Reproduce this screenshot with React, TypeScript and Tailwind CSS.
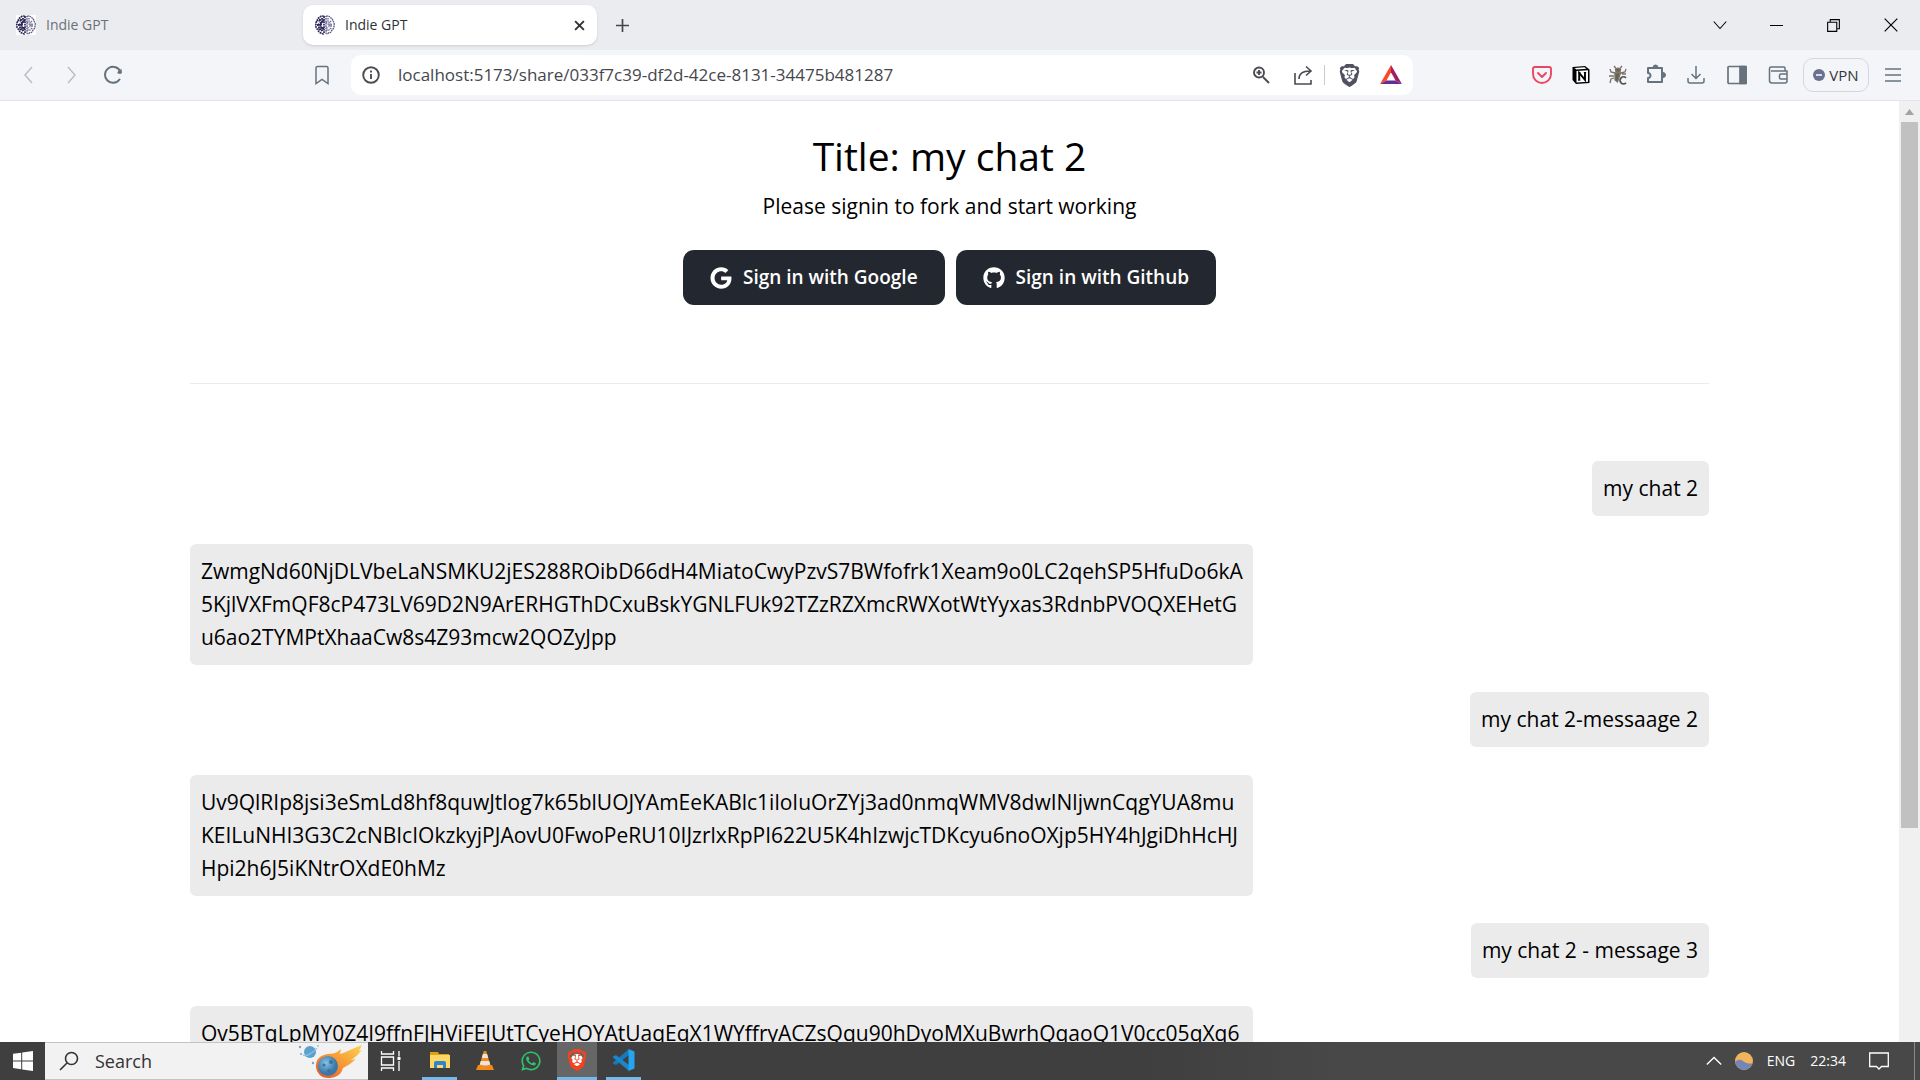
import React from "react";
import { FaGithub, FaGoogle, FaWhatsapp } from "react-icons/fa";
import { SiBrave } from "react-icons/si";

type IconProps = { className?: string };

function BrainIcon({ className }: IconProps) {
  return (
    <svg viewBox="0 0 20 20" className={className} fill="none" stroke="#2b2756" aria-hidden="true">
      <path d="M9 1.500C7 .3 5.500 1.500 5 2.500 3 3 2 4.500 2.500 6 .8 7 .3 9 1.200 10.500.6 12.500 1.500 14 3 14.500 3.300 17 5 18 6.500 17.800 7.500 19.300 9 19 9 18z" strokeWidth="1.700" strokeDasharray="1.800 .7" />
      <path d="M11 1.500c2-1.200 3.500 0 4 1 2 .5 3 2 2.500 3.500 1.700 1 2.200 3 1.300 4.500.6 2-.3 3.500-1.800 4-.3 2.500-2 3.500-3.500 3.300-1 1.500-2.500 1.200-2.500.2z" stroke="#5f5b88" strokeWidth="1.400" strokeDasharray="1.700 .7" />
      <path d="M7 3v4l-3 2v4l3 3M9 5 6 8v4l3 2M2 10h4M4 5l2 2M4 15l3-3M5 4v2M7 12v4" strokeWidth="1.900" strokeDasharray="1.700 .8" />
      <path d="M13 3v4l3 2v4l-3 3M11 7l3 3v3M16 6l-2 2M12 12v4M14 10h3" stroke="#716d98" strokeWidth="1.400" strokeDasharray="1.500 .8" />
    </svg>
  );
}

function Line({ d, size = "size-5", width = 1.5, className = "" }: { d: string; size?: string; width?: number; className?: string }) {
  return (
    <svg viewBox="0 0 20 20" className={`${size} ${className}`} fill="none" stroke="currentColor" strokeWidth={width} aria-hidden="true">
      <path d={d} />
    </svg>
  );
}

function ReloadIcon() {
  return (
    <svg viewBox="0 0 20 20" className="size-5" fill="none" stroke="currentColor" strokeWidth="2" strokeLinecap="round" aria-hidden="true">
      <path d="M16.500 14.500A8 8 0 1 1 17.500 7" />
      <path d="M18.500 3.500v4.800h-4.700z" fill="currentColor" stroke="none" />
      <circle cx="16.800" cy="7" r="2" fill="currentColor" stroke="none" />
    </svg>
  );
}

function InfoIcon() {
  return (
    <svg viewBox="0 0 20 20" className="size-5" fill="none" stroke="currentColor" strokeWidth="1.900" aria-hidden="true">
      <circle cx="10" cy="10" r="7.800" />
      <path d="M10 9v5M10 5.600v2" />
    </svg>
  );
}

function BatIcon() {
  return (
    <svg viewBox="0 0 24 22" className="h-5 w-6" aria-hidden="true">
      <path d="M12 0 0 21l7-4 5-9z" fill="#ff4724" />
      <path d="M12 0l12 21-7-4-5-9z" fill="#9e1f63" />
      <path d="M0 21h24l-7-4H7z" fill="#662d91" />
    </svg>
  );
}

function PocketIcon() {
  return (
    <svg viewBox="0 0 20 20" className="size-5 text-[#ec4561]" fill="none" stroke="currentColor" strokeWidth="1.900" strokeLinecap="round" strokeLinejoin="round" aria-hidden="true">
      <path d="M3 2h14q2 0 2 2v5a9 9 0 0 1-18 0V4q0-2 2-2z" />
      <path d="m6 8 4 4 4-4" />
    </svg>
  );
}

function NotionIcon() {
  return (
    <svg viewBox="0 0 20 20" className="size-5" aria-hidden="true">
      <path d="M1.500 2 14 1l4.500 3.500V18L5 19l-3.500-4z" fill="#000" />
      <path d="M3.500 3 13.500 2.300 15.500 3.800 5.500 4.500z" fill="#fff" />
      <path d="M5.500 6 17 5.300V16.700L5.500 17.500z" fill="#fff" />
      <path d="M8.200 15V7.800l5.800 7V7.500" fill="none" stroke="#000" strokeWidth="1.900" />
      <path d="M7 7.800h2.600M12.800 7.500h2.400M7 15.200h2.400" stroke="#000" />
    </svg>
  );
}

function BugIcon() {
  return (
    <svg viewBox="0 0 20 20" className="size-5" fill="none" stroke="#7a7267" strokeWidth="1.300" aria-hidden="true">
      <path d="M6 1 8.500 4M14 1l-2.500 3M2 4l1 3 4 1M18 4l-1 3-4 1M1 11h5M2 18l1-4 3-1M14 9h4" />
      <path d="M7.500 4.500 10 3l2.500 1.500L12 7H8z" fill="#6b6256" />
      <path d="M7 8h5.500L9.500 17 7 15z" fill="#6b6256" />
      <path d="M18 12.800a3.500 3.500 0 1 0 0 5" stroke="#555" strokeWidth="1.800" />
    </svg>
  );
}

function PuzzleIcon() {
  return (
    <svg viewBox="0 0 22 22" className="size-[22px]" fill="none" stroke="currentColor" strokeWidth="2" strokeLinejoin="round" aria-hidden="true">
      <path d="M3 4h14v14H3v-4c3 0 3.500-5 0-5z" />
      <path d="M8 3.500a2.500 2.500 0 0 1 5 0M18 8.500a2.500 2.500 0 0 1 0 5" fill="currentColor" strokeWidth="1" />
    </svg>
  );
}

function SidebarIcon() {
  return (
    <svg viewBox="0 0 20 20" className="size-5" fill="none" stroke="currentColor" strokeWidth="1.700" aria-hidden="true">
      <rect x="1" y="1.500" width="18" height="17" rx="1" />
      <path d="M13 1.500h6v17h-6z" fill="currentColor" />
    </svg>
  );
}

function WindowsIcon() {
  return (
    <svg viewBox="0 0 20 20" className="size-5" fill="#fff" aria-hidden="true">
      <path d="M0 2.800 8.200 1.700v7.700H0zM9.200 1.500 20 0v9.400H9.200zM0 10.400h8.200v7.800L0 17.100zM9.200 10.400H20V20L9.200 18.400z" />
    </svg>
  );
}

function CometArt() {
  return (
    <svg viewBox="0 0 66 34" className="h-[34px] w-[66px]" aria-hidden="true">
      <defs>
        <linearGradient id="tail" x1="0" y1="1" x2="1" y2="0">
          <stop offset="0" stopColor="#e2502c" />
          <stop offset=".5" stopColor="#f79a35" />
          <stop offset="1" stopColor="#fdd34c" />
        </linearGradient>
        <radialGradient id="rock" cx=".4" cy=".35">
          <stop offset="0" stopColor="#86c3e6" />
          <stop offset="1" stopColor="#3a78a9" />
        </radialGradient>
      </defs>
      <path d="M20 15C26 8 34 11 39 8l4-3-1 5C49 8 55 4 64 1l-3 6 3-1c-5 6-8 8-11 10l5-1c-7 6-9 7-13 9-2 8-9 10-15 10-10 0-15-11-10-19z" fill="url(#tail)" />
      <circle cx="30" cy="22" r="10" fill="url(#rock)" />
      <circle cx="33" cy="18" r="2" fill="#3f7199" />
      <circle cx="26" cy="21" r="1.600" fill="#3f7199" />
      <circle cx="31" cy="27" r="2" fill="#3f7199" />
      <circle cx="12" cy="8" r="6" fill="#5ba1ce" />
      <path d="M5 11c3 2 10-2 14-7" fill="none" stroke="#8cc2e0" strokeWidth="1.200" />
      <g fill="#6ba7cd">
        <circle cx="2" cy="3" r="1.200" />
        <circle cx="3" cy="10" r="1" />
        <circle cx="15" cy="19" r="1.200" />
        <circle cx="20" cy="2" r=".8" />
      </g>
    </svg>
  );
}

function TaskViewIcon() {
  return (
    <svg viewBox="0 0 22 20" className="h-5 w-[22px]" fill="none" stroke="#fff" strokeWidth="1.300" aria-hidden="true">
      <path d="M1.500 0v3h12V0M1.500 20v-3h12v3M1.500 6h12v8h-12zM19 0v5.500M19 10v10" />
      <path d="M17.500 6h3v3h-3z" fill="#fff" stroke="none" />
    </svg>
  );
}

function ExplorerIcon() {
  return (
    <svg viewBox="0 0 20 18" className="h-[18px] w-5" aria-hidden="true">
      <path d="M0 1h8l1 2h10v4H0z" fill="#dda318" />
      <path d="M0 4h20v13H0z" fill="#fdd663" />
      <path d="M4 17v-5q0-2 2-2h8q2 0 2 2v5h-3v-3H7v3z" fill="#2c86cf" />
    </svg>
  );
}

function VlcIcon() {
  return (
    <svg viewBox="0 0 20 20" className="size-5" aria-hidden="true">
      <path d="m3 14-2 5h18l-2-5z" fill="#f58a12" />
      <path d="M8.800 0h2.400L16 16q-6 3-12 0z" fill="#f28a1c" />
      <path d="M7.900 3h4.200l1.100 4H6.800zM5.800 10h8.400l1 3.500q-5 2-10.400 0z" fill="#e9e6e2" />
    </svg>
  );
}

function VsCodeIcon() {
  return (
    <svg viewBox="0 0 22 22" className="size-[22px]" aria-hidden="true">
      <path d="M16 0v6L3 16 0 14.500v-1z" fill="#1479bd" />
      <path d="M0 7.500 3 6l13 10v6L0 8.500z" fill="#1b86cb" />
      <path d="m15.500 0 6 2.500v17l-6 2.500z" fill="#27a4ef" />
    </svg>
  );
}

function BraveColor() {
  return (
    <span className="relative grid place-items-center">
      <span className="absolute size-3 rounded-full bg-white" />
      <SiBrave className="relative size-[22px] text-[#f4411f]" />
    </span>
  );
}

function IconButton({ label, className, children }: { label: string; className: string; children: React.ReactNode }) {
  return (
    <button type="button" aria-label={label} className={`grid shrink-0 place-items-center ${className}`}>
      {children}
    </button>
  );
}

function TabStrip() {
  return (
    <header className="flex h-[50px] shrink-0 items-center bg-[#ebecf0] text-sm">
      <button type="button" className="flex h-10 w-[303px] items-center gap-2.5 pl-4 text-[#6d6f76]">
        <span className="bg-white"><BrainIcon className="size-5" /></span>
        Indie GPT
      </button>
      <div className="flex h-10 w-[294px] items-center rounded-[10px] bg-white pr-2 pl-3 text-[#2f3136] shadow-sm">
        <BrainIcon className="size-5" />
        <span className="flex-1 pl-2.5">Indie GPT</span>
        <IconButton label="Close tab" className="size-5">
          <Line d="m2 2 16 16M18 2 2 18" size="size-[11px]" width={3.4} />
        </IconButton>
      </div>
      <IconButton label="New tab" className="ml-[11px] size-7 text-[#45474d]">
        <Line d="M10 0v20M0 10h20" size="size-[13px]" width={2.6} />
      </IconButton>
      <div className="mr-px ml-auto flex h-full text-black">
        <IconButton label="Search tabs" className="w-[57px]"><Line d="m1 5 9 10 9-10" size="size-[14px]" /></IconButton>
        <IconButton label="Minimize" className="w-[57px]"><Line d="M0 10h20" size="size-[13px]" width={1.6} /></IconButton>
        <IconButton label="Restore" className="w-[57px]"><Line d="M1 5h14v14H1zM5 5V1h14v14h-4" size="size-[13px]" width={1.7} /></IconButton>
        <IconButton label="Close window" className="w-[57px]"><Line d="m1 1 18 18M19 1 1 19" size="size-[14px]" width={1.7} /></IconButton>
      </div>
    </header>
  );
}

function Toolbar() {
  return (
    <nav aria-label="Browser" className="flex h-[51px] shrink-0 items-center border-b border-[#e2e5e9] bg-[#f3f5f8] text-[#66737e]">
      <IconButton label="Back" className="ml-2 w-[42px] text-[#b9bfc5]"><Line d="M13 2 6 10l7 8" /></IconButton>
      <IconButton label="Forward" className="w-[42px] text-[#b9bfc5]"><Line d="m7 2 7 8-7 8" /></IconButton>
      <IconButton label="Reload" className="w-[42px]"><ReloadIcon /></IconButton>
      <IconButton label="Bookmark" className="ml-[168px] w-10"><Line d="M4 18.500V3q0-1.500 1.500-1.500h9Q16 1.500 16 3v15.500l-6-4z" /></IconButton>
      <div className="ml-[9px] flex h-10 min-w-0 grow items-center rounded-[10px] bg-white pr-1 pl-[10px] text-[#4a4c52]">
        <IconButton label="Site information" className="size-5"><InfoIcon /></IconButton>
        <input
          aria-label="Address"
          readOnly
          defaultValue="localhost:5173/share/033f7c39-df2d-42ce-8131-34475b481287"
          className="ml-[17px] min-w-0 flex-1 bg-transparent text-[17px] text-[#45474c] outline-none"
        />
        <IconButton label="Zoom" className="w-10">
          <Line d="M8 2.500a5 5 0 1 1 0 10 5 5 0 0 1 0-10M12 12l6 6M5.500 7.500h5M8 5v5" width={1.9} />
        </IconButton>
        <IconButton label="Share" className="w-[43px]">
          <Line d="M2 8v11h16v-4M6 14c0-6 4-8 11-8M13 1.500 18 6l-5 4.500" width={1.6} />
        </IconButton>
        <span className="h-5 w-px bg-[#c8cacf]" />
        <IconButton label="Shields" className="w-[48px]"><SiBrave className="size-[23px] text-[#50525f]" /></IconButton>
        <IconButton label="Rewards" className="w-9"><BatIcon /></IconButton>
      </div>
      <div className="ml-[109px] flex h-full items-center">
        <IconButton label="Pocket" className="w-10"><PocketIcon /></IconButton>
        <IconButton label="Notion" className="w-[38px]"><NotionIcon /></IconButton>
        <IconButton label="Debugger" className="w-9"><BugIcon /></IconButton>
        <IconButton label="Extensions" className="w-10"><PuzzleIcon /></IconButton>
        <IconButton label="Downloads" className="w-10"><Line d="M10 1v12M5.500 9l4.500 4.500L14.500 9M2 13v3q0 2 2 2h12q2 0 2-2v-3" /></IconButton>
        <IconButton label="Sidebar" className="w-[42px]"><SidebarIcon /></IconButton>
        <IconButton label="Wallet" className="w-10"><Line d="M17 6V3q0-1-1-1H3Q1.500 2 1.500 3.500v12Q1.500 18 4 18h13q2 0 2-2V6H3M19 9h-6q-1.500 0-1.500 1.500v2q0 1.500 1.500 1.500h6" /></IconButton>
        <button type="button" className="ml-[5px] flex h-[34px] w-[66px] items-center justify-center gap-1 rounded-[10px] border border-[#d4d7de] text-[15px] text-[#33353d]">
          <svg viewBox="0 0 12 12" className="size-3" aria-hidden="true"><circle cx="6" cy="6" r="6" fill="#6b7190" /><path d="M3 6h6" stroke="#fff" strokeWidth="1.500" /></svg>
          VPN
        </button>
        <IconButton label="Menu" className="mr-[9px] ml-[6px] w-9"><Line d="M2 4h16M2 10h16M2 16h16" /></IconButton>
      </div>
    </nav>
  );
}

const messages = [
  { mine: true, text: "my chat 2" },
  {
    mine: false,
    text: "ZwmgNd60NjDLVbeLaNSMKU2jES288ROibD66dH4MiatoCwyPzvS7BWfofrk1Xeam9o0LC2qehSP5HfuDo6kA\n5KjlVXFmQF8cP473LV69D2N9ArERHGThDCxuBskYGNLFUk92TZzRZXmcRWXotWtYyxas3RdnbPVOQXEHetG\nu6ao2TYMPtXhaaCw8s4Z93mcw2QOZyJpp",
  },
  { mine: true, text: "my chat 2-messaage 2" },
  {
    mine: false,
    text: "Uv9QlRIp8jsi3eSmLd8hf8quwJtlog7k65blUOJYAmEeKABlc1iloIuOrZYj3ad0nmqWMV8dwINljwnCqgYUA8mu\nKEILuNHI3G3C2cNBIcIOkzkyjPJAovU0FwoPeRU10IJzrlxRpPI622U5K4hIzwjcTDKcyu6noOXjp5HY4hJgiDhHcHJ\nHpi2h6J5iKNtrOXdE0hMz",
  },
  { mine: true, text: "my chat 2 - message 3" },
  {
    mine: false,
    text: "Ov5BTqLpMY0Z4I9ffnFJHViFEJUtTCyeHOYAtUaqEqX1WYffryACZsQqu90hDyoMXuBwrhQqaoQ1V0cc05qXq6",
  },
];

function SharedChat() {
  return (
    <main className="min-w-0 flex-1 overflow-hidden bg-white text-black">
      <section className="flex flex-col items-center pt-[27px]">
        <h1 className="text-[39px] leading-[56px]">Title: my chat 2</h1>
        <p className="mt-[6px] text-[21px] leading-[33px]">Please signin to fork and start working</p>
        <div className="mt-[27px] flex gap-[11px] text-[19px] font-semibold text-white">
          <button type="button" className="flex h-[55px] items-center gap-[11px] rounded-[11px] bg-[#23272f] px-[27px]">
            <FaGoogle className="size-[22px]" />
            Sign in with Google
          </button>
          <button type="button" className="flex h-[55px] items-center gap-[11px] rounded-[11px] bg-[#23272f] px-[27px]">
            <FaGithub className="size-[22px]" />
            Sign in with Github
          </button>
        </div>
      </section>
      <hr className="mx-auto mt-[78px] mb-[77px] w-4/5 border-[#ebebeb]" />
      <ul className="mx-auto flex w-4/5 flex-col">
        {messages.map((m) => (
          <li
            key={m.text}
            className={
              m.mine
                ? "mb-7 self-end rounded-md bg-[#ebebeb] p-[11px] text-[21px] leading-[33px]"
                : "mb-[27px] w-[70%] self-start rounded-md bg-[#ebebeb] p-[11px] text-[21px] leading-[33px] whitespace-pre"
            }
          >
            {m.text}
          </li>
        ))}
      </ul>
    </main>
  );
}

function Scrollbar() {
  return (
    <div className="flex w-[21px] shrink-0 flex-col items-center bg-[#f0f0f0]">
      <svg viewBox="0 0 21 21" className="size-[21px] shrink-0" aria-hidden="true"><path d="m6 14 4.500-6L15 14z" fill="#a3a3a3" /></svg>
      <div className="h-3/4 w-[17px] bg-[#c1c1c1]" />
    </div>
  );
}

function Taskbar() {
  return (
    <footer className="flex h-[38px] shrink-0 items-stretch bg-linear-to-r from-[#3f3f3f] from-60% to-[#484848] to-70% text-white">
      <IconButton label="Start" className="w-[45px]"><WindowsIcon /></IconButton>
      <label className="flex w-[323px] items-center border-y border-[#c4c4c4] bg-[#f2f2f2] pl-[14px] text-[#333]">
        <Line d="M12.500 1.500a6 6 0 1 1 0 12 6 6 0 0 1 0-12M8 12l-7 7" width={1.6} />
        <input type="text" aria-label="Search" placeholder="Search" className="ml-4 min-w-0 flex-1 bg-transparent text-lg outline-none placeholder:text-[#333]" />
        <span className="mr-1"><CometArt /></span>
      </label>
      <IconButton label="Task view" className="w-[45px]"><TaskViewIcon /></IconButton>
      <div className="flex gap-[9px] pl-[9px]">
        <IconButton label="File Explorer" className="w-[35px] border-b-3 border-[#76b9ed]"><ExplorerIcon /></IconButton>
        <IconButton label="VLC" className="w-[38px]"><VlcIcon /></IconButton>
        <IconButton label="WhatsApp" className="w-[35px]"><FaWhatsapp className="size-[22px] text-[#2cc56c]" /></IconButton>
        <IconButton label="Brave" className="w-[40px] border-b-3 border-[#76b9ed] bg-[#666]"><BraveColor /></IconButton>
        <IconButton label="Visual Studio Code" className="w-[35px] border-b-3 border-[#76b9ed]"><VsCodeIcon /></IconButton>
      </div>
      <div className="ml-auto flex items-center text-sm">
        <IconButton label="Hidden icons" className="w-[30px]"><Line d="m2 14 8-8 8 8" size="size-[18px]" /></IconButton>
        <IconButton label="Weather" className="w-[30px]">
          <svg viewBox="0 0 18 18" className="size-[18px]" aria-hidden="true"><circle cx="9" cy="9" r="9" fill="#f0b45b" /><path d="M0 10q4-4 8-1 3 3 9.500 2.500A9 9 0 0 1 0 10z" fill="#7386b8" /></svg>
        </IconButton>
        <span className="ml-2">ENG</span>
        <time className="ml-[15px]">22:34</time>
        <IconButton label="Notifications" className="mr-[25px] ml-[23px] w-5"><Line d="M.7 2h18.600v13.500h-6.800L10 18l-2.500-2.500H.700z" width={1.3} /></IconButton>
        <span className="mr-[5px] h-[38px] w-px bg-[#8a8a8a]" />
      </div>
    </footer>
  );
}

export default function App() {
  return (
    <div className="flex h-screen flex-col overflow-hidden font-['Open_Sans',sans-serif]">
      <TabStrip />
      <Toolbar />
      <div className="flex min-h-0 flex-1">
        <SharedChat />
        <Scrollbar />
      </div>
      <Taskbar />
    </div>
  );
}
